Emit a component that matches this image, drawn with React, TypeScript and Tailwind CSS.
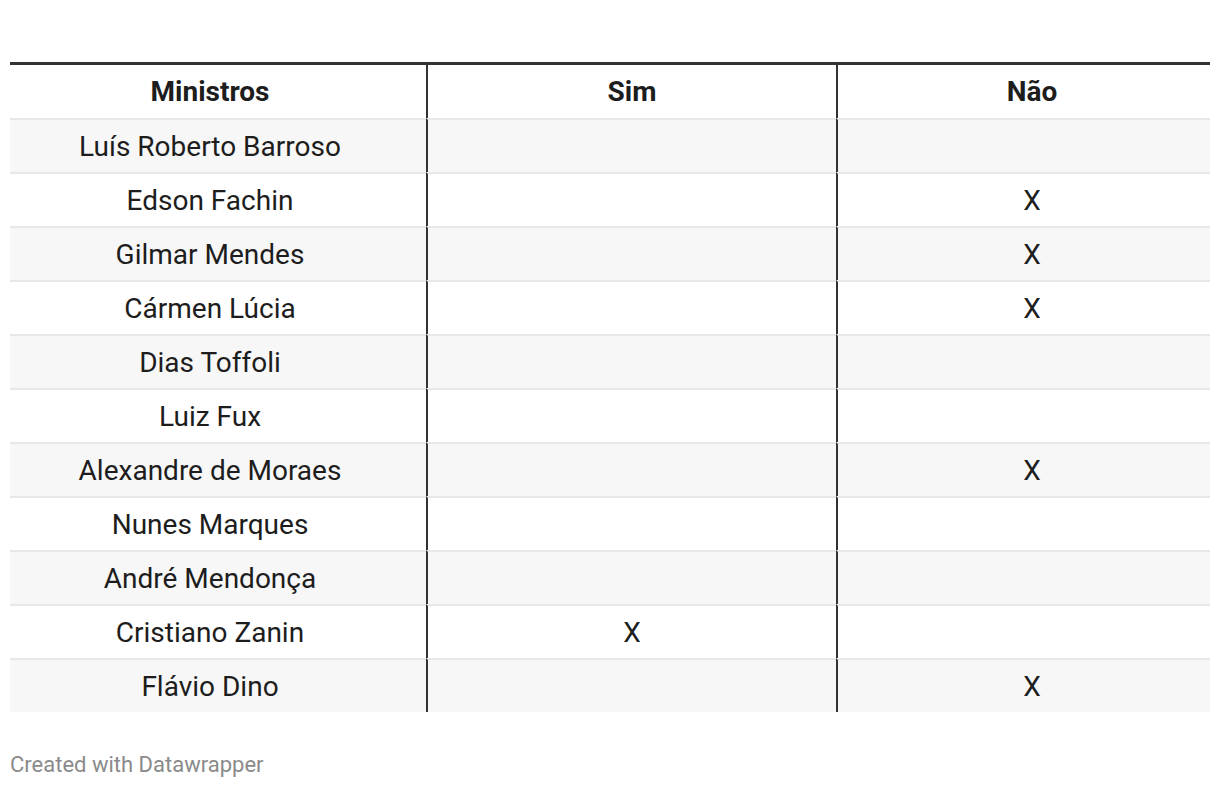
const rows: { name: string; sim: boolean; nao: boolean }[] = [
  { name: 'Luís Roberto Barroso', sim: false, nao: false },
  { name: 'Edson Fachin', sim: false, nao: true },
  { name: 'Gilmar Mendes', sim: false, nao: true },
  { name: 'Cármen Lúcia', sim: false, nao: true },
  { name: 'Dias Toffoli', sim: false, nao: false },
  { name: 'Luiz Fux', sim: false, nao: false },
  { name: 'Alexandre de Moraes', sim: false, nao: true },
  { name: 'Nunes Marques', sim: false, nao: false },
  { name: 'André Mendonça', sim: false, nao: false },
  { name: 'Cristiano Zanin', sim: true, nao: false },
  { name: 'Flávio Dino', sim: false, nao: true },
];

export default function App() {
  return (
    <div className="min-h-screen bg-white px-[10px] pt-[62px] font-['Roboto',sans-serif] text-[#1d1d1d]">
      <div className="w-[1200px] border-t-[3px] border-[#333333]">
        {/* header */}
        <div className="grid h-[53px] grid-cols-[416px_410px_374px] text-[28px] font-bold">
          <div className="flex items-center justify-center pr-[16px]">Ministros</div>
          <div className="flex items-center justify-center border-l-2 border-[#333333]">Sim</div>
          <div className="flex items-center justify-center border-l-2 border-[#333333] pl-[16px]">Não</div>
        </div>

        {/* rows */}
        {rows.map((r, i) => (
          <div
            key={r.name}
            className={`grid h-[54px] grid-cols-[416px_410px_374px] text-[28px] leading-none ${i % 2 === 0 ? 'bg-[#f7f7f7]' : 'bg-white'}`}
          >
            <div className="flex items-center justify-center border-t-2 border-[#e8e8e8] pt-[2px] pr-[16px]">{r.name}</div>
            <div className="flex items-center justify-center border-t-2 border-l-2 border-t-[#e8e8e8] border-l-[#333333] pt-[2px]">
              {r.sim ? 'X' : ''}
            </div>
            <div className="flex items-center justify-center border-t-2 border-l-2 border-t-[#e8e8e8] border-l-[#333333] pt-[2px] pl-[16px]">
              {r.nao ? 'X' : ''}
            </div>
          </div>
        ))}
      </div>
      <p className="mt-[42px] text-[22px] leading-none text-[#8a8a8a]">Created with Datawrapper</p>
    </div>
  );
}
